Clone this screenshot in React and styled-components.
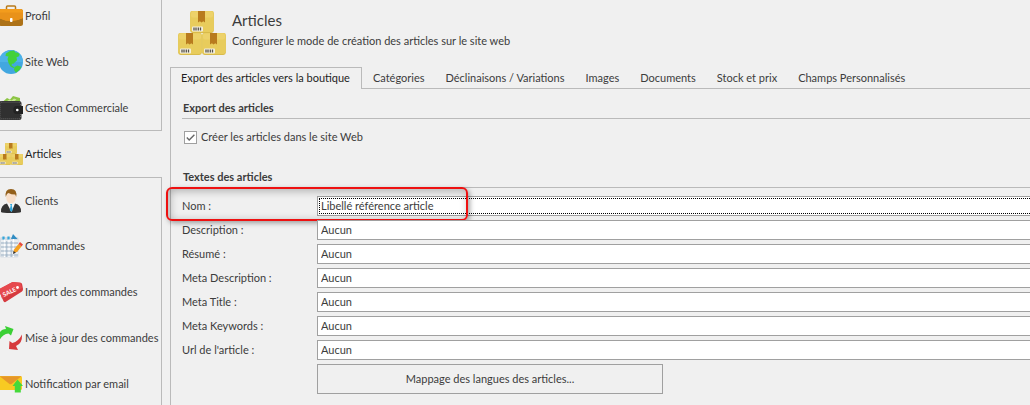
import React from 'react';
import styled, { createGlobalStyle, css } from 'styled-components';

const colors = {
  background: '#f0f0f0',
  line: '#bababa',
  field: '#a0a0a0',
  text: '#3c3c3c',
  active: '#1e1e1e',
  white: '#ffffff',
  red: '#ee1111',
};

const fonts = {
  ui: 'Lato, "DejaVu Sans Condensed", sans-serif',
};

const GlobalStyle = createGlobalStyle`
  *, *::before, *::after {
    box-sizing: border-box;
  }

  body {
    margin: 0;
    overflow: hidden;
    background: ${colors.background};
    color: ${colors.text};
    font-family: ${fonts.ui};
    font-size: 11px;
    line-height: 14px;
  }

  button, select, input {
    margin: 0;
    color: inherit;
    font: inherit;
  }
`;

const Layout = styled.div`
  display: flex;
  height: 100vh;
  overflow: hidden;
`;

const Sidebar = styled.nav`
  flex: none;
  width: 162px;
  margin-right: 8px;
`;

const NavList = styled.ul`
  margin: -7px 0 0;
  padding: 0;
  list-style: none;
`;

const NavLink = styled.a`
  display: flex;
  align-items: center;
  gap: 2px;
  height: 46px;
  margin-left: -1px;
  color: ${({ $active }) => ($active ? colors.active : colors.text)};
  text-decoration: none;
  white-space: nowrap;
`;

const NavItem = styled.li`
  height: 46px;
  border: 0 solid ${colors.line};
  border-right-width: ${({ $active }) => ($active ? 0 : '1px')};

  &:has(+ [data-active='true']) {
    border-bottom-width: 1px;
  }

  &[data-active='true'] + & {
    border-top-width: 1px;

    ${NavLink} {
      margin-top: -1px;
    }
  }
`;

const Icon = styled.svg`
  display: block;
  flex: none;
  width: ${({ $size }) => $size}px;
  height: ${({ $size }) => $size}px;
`;

const Main = styled.main`
  display: flex;
  flex: 1;
  flex-direction: column;
  min-width: 0;
`;

const Header = styled.header`
  display: flex;
  gap: 6px;
  height: 67px;
  padding: 9px 8px 0;
`;

const Title = styled.h1`
  margin: 1px 0 4px;
  font-size: 15px;
  font-weight: 400;
  line-height: 20px;
`;

const Subtitle = styled.p`
  margin: 0;
`;

const Tabs = styled.div`
  display: flex;
  height: 22px;

  &::after {
    content: '';
    flex: 1;
    border-bottom: 1px solid ${colors.line};
  }
`;

const Tab = styled.button`
  flex: none;
  padding: 0 10px 0 11px;
  border: 0 solid ${colors.line};
  border-bottom-width: 1px;
  background: none;
  white-space: nowrap;

  ${({ $active }) =>
    $active &&
    css`
      padding: 0 11px 1px 10px;
      border-width: 1px 1px 0;
      color: ${colors.active};
    `}
`;

/* The panel runs on past the right edge of the window. */
const Panel = styled.form`
  flex: 1;
  margin-right: -12px;
  padding: 12px 0 0 11px;
  border-left: 1px solid ${colors.line};
`;

const SectionTitle = styled.h2`
  margin: 0;
  padding: 0 0 3px 1px;
  border-bottom: 1px solid ${colors.line};
  font-size: 11px;
  font-weight: 700;
  line-height: 14px;
`;

const CheckRow = styled.label`
  display: flex;
  align-items: center;
  gap: 4px;
  width: max-content;
  margin: 11px 0 26px 2px;
`;

const Checkbox = styled.input`
  appearance: none;
  display: block;
  width: 13px;
  height: 13px;
  border: 1px solid ${colors.field};
  background: ${colors.white};

  &:checked {
    background: ${colors.white}
      url("data:image/svg+xml,%3Csvg xmlns='http://www.w3.org/2000/svg' viewBox='0 0 11 11'%3E%3Cpath d='M1.8 5.6 4.2 8 9.4 2.8' fill='none' stroke='%23666' stroke-width='1.4'/%3E%3C/svg%3E");
  }
`;

const Fields = styled.div`
  display: flex;
  flex-direction: column;
  gap: 4px;
  padding-top: 8px;
`;

const Field = styled.div`
  position: relative;
  display: grid;
  grid-template-columns: 135px 1fr;
  align-items: center;
`;

const Select = styled.select`
  appearance: none;
  width: 100%;
  height: 20px;
  padding: 0 3px;
  border: 1px solid ${colors.field};
  border-radius: 0;
  background: ${colors.white};

  ${({ $current }) =>
    $current &&
    css`
      outline: 1px dotted #000;
      outline-offset: -3px;
    `}
`;

const Highlight = styled.span`
  position: absolute;
  top: -9px;
  left: -16px;
  width: 302px;
  height: 34px;
  border: 2px solid ${colors.red};
  border-radius: 6px;
  box-shadow: 2px 2px 5px rgba(0, 0, 0, 0.35), inset 2px 2px 8px rgba(0, 0, 0, 0.28);
  pointer-events: none;
`;

const MappingButton = styled.button`
  width: 346px;
  height: 30px;
  margin-left: 135px;
  border: 1px solid ${colors.field};
  background: ${colors.background};
`;

const Parcel = ({ x, y }) => (
  <g transform={`translate(${x} ${y})`}>
    <rect x="0.2" width="23.6" height="22" rx="2.4" fill="#d9bb4a" />
    <rect x="0.2" width="23.6" height="21" rx="2.4" fill="#e8cc5c" />
    <rect x="1" y="0.5" width="22" height="6" rx="2" fill="#edd26a" />
    <path d="M8 0h7v11.5l-1.7-1.2-1.7 1.2-1.7-1.2L8 11.5z" fill="#b87b1e" />
    <rect x="2" y="15.5" width="11" height="5" rx="1" fill="#f4efe0" />
    <path d="M4 16.5v3M6 16.5v3M8.3 16.5v3M10.5 16.5v3" stroke="#55524a" strokeWidth="1.3" />
  </g>
);

const Parcels = ({ size = 24 }) => (
  <Icon $size={size} viewBox="0 0 48 48" aria-hidden="true">
    <Parcel x={12} y={2} />
    <Parcel x={0} y={24} />
    <Parcel x={24} y={24} />
  </Icon>
);

const Briefcase = () => (
  <Icon $size={24} viewBox="0 0 24 24" aria-hidden="true">
    <path d="M7.5 5V3q0-1 1-1h7q1 0 1 1v2" fill="none" stroke="#b87a1a" strokeWidth="1.5" />
    <rect y="5" width="24" height="17" rx="2.5" fill="#ad7218" />
    <path d="M0 7.5Q0 5 2.5 5h19Q24 5 24 7.5V14q-6 3-12 3T0 14z" fill="#f39c1c" />
    <path d="M0 14V8.5h24V14q-6 3-12 3T0 14z" fill="#e9921a" />
    <rect x="11" y="14" width="2.5" height="4" rx="0.8" fill="#fff" />
  </Icon>
);

const Globe = () => (
  <Icon $size={24} viewBox="0 0 24 24" aria-hidden="true">
    <circle cx="12" cy="12" r="12" fill="#42a7e0" />
    <path d="M12 0a12 12 0 0 1 12 12H0A12 12 0 0 1 12 0z" fill="#4db2e8" />
    <path d="M7 3.5 11 1l4-.5 1.5 2L19 2.8l1.500 1.500-.5 2-2.500 1 .5 3-2 2-1.500 1.500-1.500 0-.5 1.500 1.500 1 1.500 1.500-1 .2-3-1.500-2-3.500-1-4 1-2.500-3-.5z" fill="#43d13b" />
    <path d="M15.5 17l3-1.5 3 1 .7.8a12 12 0 0 1-5.200 5.400L15 20z" fill="#43d13b" />
  </Icon>
);

const Wallet = () => (
  <Icon $size={24} viewBox="0 0 24 24" aria-hidden="true">
    <path d="M4 5.5 8 2l3 1.500L14 0l7 2v4z" fill="#8cc544" />
    <path d="M8 5l2.500-1.500 2 1 2.500-2 2.500 1-2.500 2z" fill="#c9e695" />
    <rect y="5" width="22.5" height="19" rx="2.5" fill="#303030" />
    <rect x="1" y="6.2" width="20.5" height="16.6" rx="1.5" fill="none" stroke="#858585" strokeWidth="0.7" strokeDasharray="1 1" />
    <path d="M24 10v8h-6.500a3 3 0 0 1-3-4 3 3 0 0 1 3-4z" fill="#222" />
    <circle cx="18.3" cy="14" r="1.3" fill="#fff" />
  </Icon>
);

const Person = () => (
  <Icon $size={24} viewBox="0 0 24 24" aria-hidden="true">
    <path d="M2 23Q1.5 16 8 14.5l4 2 4-2q6.500 1.500 6 8.500-1 1-10 1T2 23z" fill="#333" />
    <path d="M8 14.5 12 12l4 2.500L12.500 23z" fill="#f6f6f6" />
    <path d="M11 15h2.200l-.5 1.500 1 4.500-1.500 2-1.500-2 1-4.500z" fill="#2fa4d9" />
    <ellipse cx="12" cy="8.2" rx="4.8" ry="6.3" fill="#f8dfca" />
    <path d="M6.8 8Q5.5.2 12 0q6.500.2 5.200 8l-1-2.500Q12 5.500 9.500 4 8 4.500 7.500 6z" fill="#93601b" />
  </Icon>
);

const Sheet = () => (
  <Icon $size={24} viewBox="0 0 24 24" aria-hidden="true">
    <rect x="1" y="3" width="18.5" height="20.5" rx="1.5" fill="#d5dce3" />
    <path d="M2 7h17M2 11h17M2 15h17M2 19h17M5.500 5v18M10 5v18M14.500 5v18" stroke="#fff" strokeWidth="1.2" />
    <path d="M2 9h17M2 13h17M2 17h17M2 21h17M7.700 7v16M12.300 7v16" stroke="#9fb4c8" strokeWidth="0.8" />
    <path d="M4.500 2.500v3M9.500 2.500v3" stroke="#35a6d9" strokeWidth="2.2" />
    <path d="M14 0l4.500 5H12z" fill="#318dc3" />
    <path d="M15 15.500 19.500 10l3 2.500L18 18l-3.500.7z" fill="#f5a01e" />
    <path d="M19.500 10l1.500-2 3 2.500-1.500 2z" fill="#e84b3c" />
    <path d="M14 20l.5-3 2.500 1.800z" fill="#333" />
  </Icon>
);

const SaleTag = () => (
  <Icon $size={24} viewBox="0 0 24 24" aria-hidden="true">
    <path d="M0 9.500 13.500 2l8 .7q1.500.3 1.700 1.700l.8 4.600q0 1.500-1 2.500L6.500 22q-1 .5-2-.8L.2 11.500z" fill="#d63b40" />
    <path d="M0 9 13.500 2l8 .7L23 8 3 18.500z" fill="#e6494e" />
    <circle cx="18.5" cy="7.5" r="1.4" fill="#fff" />
    <text x="5" y="17" transform="rotate(-26 5 17)" fill="#fff" fontSize="6" fontWeight="700">SALE</text>
  </Icon>
);

const Sync = () => (
  <Icon $size={24} viewBox="0 0 24 24" aria-hidden="true">
    <path d="M0 15.500V8q2-5 7-5L6 0l8.500 3L12 9.500 9.500 7.500Q3 8 0 15.500z" fill="#3bd035" />
    <path d="M23 8.500q.5 9-6 11.500l2 4-9-1 .5-8 2.800 2Q19.500 15.500 23 8.500z" fill="#d63a3d" />
  </Icon>
);

const Mail = () => (
  <Icon $size={24} viewBox="0 0 24 24" aria-hidden="true">
    <rect y="4" width="23" height="14" rx="1.5" fill="#f8ca22" />
    <path d="M.5 4.200h22L12.500 12q-1 .7-2 0z" fill="#e6962a" />
    <path d="M18.500 7.500 24 14h-2.200v6.500h-6V14H13.500z" fill="#45d93b" />
  </Icon>
);

const navItems = [
  { label: 'Profil', icon: Briefcase },
  { label: 'Site Web', icon: Globe },
  { label: 'Gestion Commerciale', icon: Wallet },
  { label: 'Articles', icon: Parcels, active: true },
  { label: 'Clients', icon: Person },
  { label: 'Commandes', icon: Sheet },
  { label: 'Import des commandes', icon: SaleTag },
  { label: 'Mise à jour des commandes', icon: Sync },
  { label: 'Notification par email', icon: Mail },
];

const tabs = [
  'Export des articles vers la boutique',
  'Catégories',
  'Déclinaisons / Variations',
  'Images',
  'Documents',
  'Stock et prix',
  'Champs Personnalisés',
];

const fields = [
  { id: 'nom', label: 'Nom :', value: 'Libellé référence article', current: true },
  { id: 'description', label: 'Description :', value: 'Aucun' },
  { id: 'resume', label: 'Résumé :', value: 'Aucun' },
  { id: 'meta-description', label: 'Meta Description :', value: 'Aucun' },
  { id: 'meta-title', label: 'Meta Title :', value: 'Aucun' },
  { id: 'meta-keywords', label: 'Meta Keywords :', value: 'Aucun' },
  { id: 'url', label: "Url de l'article :", value: 'Aucun' },
];

const App = () => (
  <Layout>
    <GlobalStyle />
    <Sidebar>
      <NavList>
        {navItems.map(({ label, icon: ItemIcon, active }) => (
          <NavItem key={label} $active={active} data-active={!!active}>
            <NavLink href="#" $active={active}>
              <ItemIcon />
              {label}
            </NavLink>
          </NavItem>
        ))}
      </NavList>
    </Sidebar>
    <Main>
      <Header>
        <Parcels size={48} />
        <div>
          <Title>Articles</Title>
          <Subtitle>Configurer le mode de création des articles sur le site web</Subtitle>
        </div>
      </Header>
      <Tabs role="tablist">
        {tabs.map((tab, i) => (
          <Tab key={tab} type="button" role="tab" aria-selected={i === 0} $active={i === 0}>
            {tab}
          </Tab>
        ))}
      </Tabs>
      <Panel>
        <SectionTitle>Export des articles</SectionTitle>
        <CheckRow>
          <Checkbox type="checkbox" defaultChecked />
          Créer les articles dans le site Web
        </CheckRow>
        <SectionTitle>Textes des articles</SectionTitle>
        <Fields>
          {fields.map(({ id, label, value, current }) => (
            <Field key={id}>
              <label htmlFor={id}>{label}</label>
              <Select id={id} $current={current}>
                <option>{value}</option>
              </Select>
              {current && <Highlight />}
            </Field>
          ))}
          <MappingButton type="button">Mappage des langues des articles...</MappingButton>
        </Fields>
      </Panel>
    </Main>
  </Layout>
);

export default App;
